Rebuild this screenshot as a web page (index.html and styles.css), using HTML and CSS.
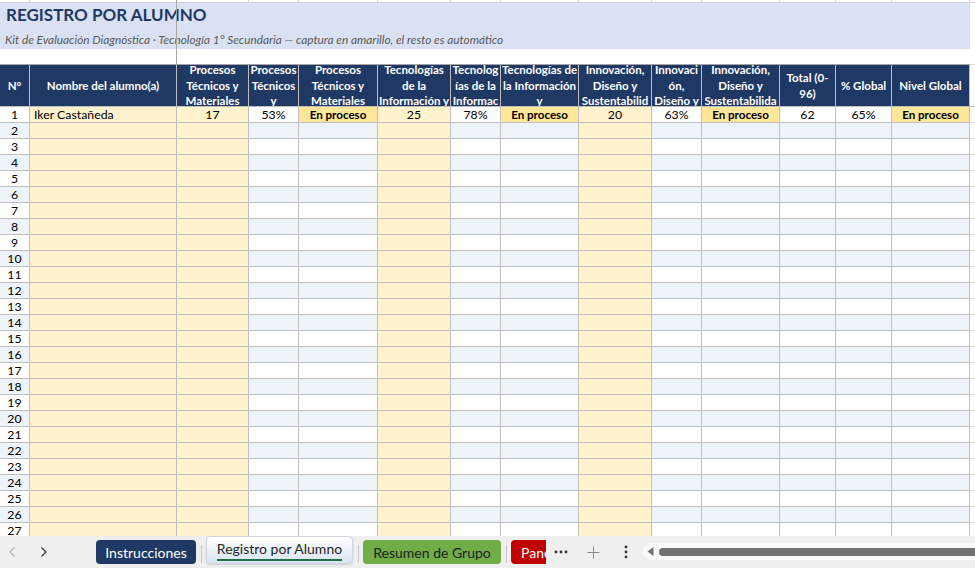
FILE: index.html
```html
<!DOCTYPE html>
<html lang="es">
<head>
  <meta charset="UTF-8">
  <title>Registro por Alumno</title>
  <link rel="stylesheet" href="styles.css">
</head>
<body>

  <div class="sheet">
    <table id="tabla" class="grid">
      <colgroup>
        <col style="width:30px"><col style="width:147px"><col style="width:72px"><col style="width:50px">
        <col style="width:79px"><col style="width:73px"><col style="width:50px"><col style="width:78px">
        <col style="width:73px"><col style="width:50px"><col style="width:78px"><col style="width:56px">
        <col style="width:56px"><col style="width:78px"><col style="width:60px">
      </colgroup>
      <thead>
        <tr class="strip">
          <td></td><td></td><td></td><td></td><td></td><td></td><td></td><td></td>
          <td></td><td></td><td></td><td></td><td></td><td></td><td></td>
        </tr>
        <tr class="band">
          <td colspan="14" class="titulo">
            <div class="t1">REGISTRO POR ALUMNO</div>
            <div class="t2">Kit de Evaluación Diagnóstica · Tecnología 1° Secundaria — captura en amarillo, el resto es automático</div>
          </td>
          <td class="x"></td>
        </tr>
        <tr class="gap">
          <td colspan="14"></td><td class="x"></td>
        </tr>
        <tr class="head">
          <th><div class="hd"><span>N°</span></div></th>
          <th><div class="hd"><span>Nombre del alumno(a)</span></div></th>
          <th class="ov"><div class="hd"><span>Procesos<br>Técnicos y<br>Materiales</span></div></th>
          <th class="ov"><div class="hd"><span>Procesos<br>Técnicos<br>y</span></div></th>
          <th class="ov"><div class="hd"><span>Procesos<br>Técnicos y<br>Materiales</span></div></th>
          <th class="ov"><div class="hd"><span>Tecnologías<br>de la<br>Información y</span></div></th>
          <th class="ov"><div class="hd"><span>Tecnolog<br>ías de la<br>Informac</span></div></th>
          <th class="ov"><div class="hd"><span>Tecnologías de<br>la Información<br>y</span></div></th>
          <th class="ov"><div class="hd"><span>Innovación,<br>Diseño y<br>Sustentabilid</span></div></th>
          <th class="ov"><div class="hd"><span>Innovaci<br>ón,<br>Diseño y</span></div></th>
          <th class="ov"><div class="hd"><span>Innovación,<br>Diseño y<br>Sustentabilida</span></div></th>
          <th><div class="hd"><span>Total (0-<br>96)</span></div></th>
          <th><div class="hd"><span>% Global</span></div></th>
          <th><div class="hd"><span>Nivel Global</span></div></th>
          <th class="x"></th>
        </tr>
      </thead>
      <tbody>
        <tr>
          <td class="c-n">1</td>
          <td class="c-name">Iker Castañeda</td>
          <td class="c-sc">17</td>
          <td class="c-p">53%</td>
          <td class="c-lv on">En proceso</td>
          <td class="c-sc">25</td>
          <td class="c-p">78%</td>
          <td class="c-lv on">En proceso</td>
          <td class="c-sc">20</td>
          <td class="c-p">63%</td>
          <td class="c-lv on">En proceso</td>
          <td class="c-t">62</td>
          <td class="c-p">65%</td>
          <td class="c-lv on">En proceso</td>
          <td class="x"></td>
        </tr>
      </tbody>
    </table>
    <div class="freeze"></div>
  </div>

  <div class="tabs">
    <span class="nav">
      <svg width="8" height="12" viewBox="0 0 8 12"><path d="M6.5 1.5 L2 6 L6.5 10.5" fill="none" stroke="#b4b4b4" stroke-width="1.2"/></svg>
    </span>
    <span class="nav next">
      <svg width="8" height="12" viewBox="0 0 8 12"><path d="M1.5 1.5 L6 6 L1.5 10.5" fill="none" stroke="#333" stroke-width="1.2"/></svg>
    </span>
    <span class="tab azul">Instrucciones</span>
    <span class="sep"></span>
    <span class="tab activa"><span>Registro por Alumno</span></span>
    <span class="sep"></span>
    <span class="tab verde">Resumen de Grupo</span>
    <span class="sep"></span>
    <span class="tab roja">Panel</span>
    <span class="ico mas">
      <svg width="14" height="4" viewBox="0 0 14 4"><circle cx="2" cy="2" r="1.4" fill="#333"/><circle cx="7" cy="2" r="1.4" fill="#333"/><circle cx="12" cy="2" r="1.4" fill="#333"/></svg>
    </span>
    <span class="ico add">
      <svg width="13" height="13" viewBox="0 0 13 13"><path d="M6.5 0.5 V12.5 M0.5 6.5 H12.5" stroke="#8a8a8a" stroke-width="1"/></svg>
    </span>
    <span class="ico menu">
      <svg width="4" height="14" viewBox="0 0 4 14"><circle cx="2" cy="2" r="1.4" fill="#333"/><circle cx="2" cy="7" r="1.4" fill="#333"/><circle cx="2" cy="12" r="1.4" fill="#333"/></svg>
    </span>
    <div class="scroll">
      <svg width="7" height="9" viewBox="0 0 7 9"><path d="M6.5 0 V9 L0.5 4.5 Z" fill="#707070"/></svg>
      <span class="thumb"></span>
    </div>
  </div>

  <script>
    const cuerpo = document.querySelector('#tabla tbody');
    const clases = ['c-n', 'c-name', 'c-sc', 'c-p', 'c-lv', 'c-sc', 'c-p', 'c-lv',
                    'c-sc', 'c-p', 'c-lv', 'c-t', 'c-p', 'c-lv', 'x'];

    for (let i = 2; i <= 27; i++) {
      const tr = document.createElement('tr');
      if (i % 2 === 0) tr.className = 'alt';
      tr.innerHTML = clases.map((c, j) => `<td class="${c}">${j === 0 ? i : ''}</td>`).join('');
      cuerpo.appendChild(tr);
    }
  </script>

</body>
</html>
```

FILE: styles.css
```css
body {
  margin: 0;
  width: 975px;
  height: 568px;
  overflow: hidden;
  background: #fff;
  font-family: Lato, "Liberation Sans", sans-serif;
  color: #000;
}

.sheet {
  position: relative;
  height: 536px;
  overflow: hidden;
}

.grid {
  border-collapse: separate;
  border-spacing: 0;
  table-layout: fixed;
  width: 1030px;
  font-size: 12.3px;
}

.grid td {
  padding: 0 2px;
  border-right: 1px solid #bfbfbf;
  border-bottom: 1px solid #bfbfbf;
  line-height: 15px;
  white-space: nowrap;
  overflow: hidden;
  text-align: center;
  background: #fff;
}

/* fila cortada de arriba */
.strip { height: 3px; }
.strip td {
  padding: 0;
  line-height: 0;
  font-size: 0;
  border-color: #d4d4d4;
}

.band { height: 46px; }
.band td {
  border: none;
  vertical-align: top;
  text-align: left;
  padding: 0;
}
.titulo { background: #d9e1f2 !important; }

.t1 {
  font-size: 17px;
  font-weight: 700;
  color: #1f3864;
  line-height: 22px;
  padding: 1px 0 0 6px;
}
.t2 {
  font-size: 11.8px;
  font-style: italic;
  color: #595959;
  line-height: 14px;
  margin-top: 7px;
  padding-left: 5px;
}

.gap { height: 16px; }
.gap td {
  border-right: none;
  border-bottom: 1px solid #a6a6a6;
}

.head { height: 42px; }
.head th {
  padding: 0 1px;
  background: #1f3864;
  color: #fff;
  font-size: 11.5px;
  font-weight: 700;
  border-right: 1px solid #bfbfbf;
  border-bottom: 1px solid #bfbfbf;
  overflow: hidden;
}
.hd {
  height: 41px;
  display: flex;
  flex-direction: column;
  justify-content: center;
  overflow: hidden;
  line-height: 15.5px;
  white-space: nowrap;
}
.ov .hd { justify-content: flex-start; }
.ov .hd span { margin-top: -3px; }

.head th.x {
  background: #fff;
  border-right: none;
}

.grid td.x {
  border-right: none;
  border-bottom-color: #e1e1e1;
}

.grid tbody tr { height: 16px; }

.c-name {
  text-align: left !important;
  padding-left: 4px !important;
}
.grid td.c-name,
.grid td.c-sc { background: #fff2cc; }

.grid tr.alt td.c-n,
.grid tr.alt td.c-p,
.grid tr.alt td.c-lv,
.grid tr.alt td.c-t { background: #eef3fa; }

.grid td.on {
  background: #ffe699;
  font-weight: 700;
  font-size: 11.6px;
}

.freeze {
  position: absolute;
  left: 176px;
  top: 0;
  width: 1px;
  height: 64px;
  background: #a6a6a6;
}

/* barra de hojas */
.tabs {
  height: 32px;
  background: #efefef;
  display: flex;
  align-items: flex-start;
  font-size: 14px;
  white-space: nowrap;
  overflow: hidden;
}

.nav {
  width: 24px;
  height: 32px;
  display: flex;
  align-items: center;
  justify-content: center;
}
.nav.next { margin-left: 8px; margin-right: 40px; }

.tab {
  height: 24px;
  margin-top: 4px;
  border-radius: 4px;
  display: flex;
  align-items: center;
  justify-content: center;
  box-sizing: border-box;
  overflow: hidden;
}
.azul { width: 100px; background: #1f3864; color: #fff; }
.verde { width: 138px; background: #70ad47; color: #1b1b1b; }
.roja {
  width: 35px;
  background: #c00000;
  color: #fff;
  justify-content: flex-start;
  padding-left: 10px;
  border-radius: 4px 0 0 4px;
}

.activa {
  width: 147px;
  height: 28px;
  margin-top: 0;
  background: linear-gradient(#ffffff, #d9e4f1);
  border: 1px solid #cdd6e0;
  box-shadow: 0 1px 2px rgba(0, 0, 0, 0.12);
  color: #242424;
}
.activa span {
  line-height: 18px;
  border-bottom: 2px solid #1e7145;
  padding-bottom: 1px;
}

.sep {
  width: 1px;
  height: 18px;
  margin: 9px 4px 0 5px;
  background: #c8c8c8;
}

.ico {
  height: 32px;
  display: flex;
  align-items: center;
  justify-content: center;
}
.mas { width: 20px; margin-left: 5px; }
.add { width: 21px; margin-left: 12px; }
.menu { width: 20px; margin-left: 12px; }

.scroll {
  flex: 1;
  height: 17px;
  margin: 7px 0 0 7px;
  background: #f8f8f8;
  border-radius: 9px 0 0 9px;
  display: flex;
  align-items: center;
  padding-left: 4px;
}
.thumb {
  flex: 1;
  height: 8px;
  margin-left: 5px;
  background: #707070;
  border-radius: 4px 0 0 4px;
}
```
